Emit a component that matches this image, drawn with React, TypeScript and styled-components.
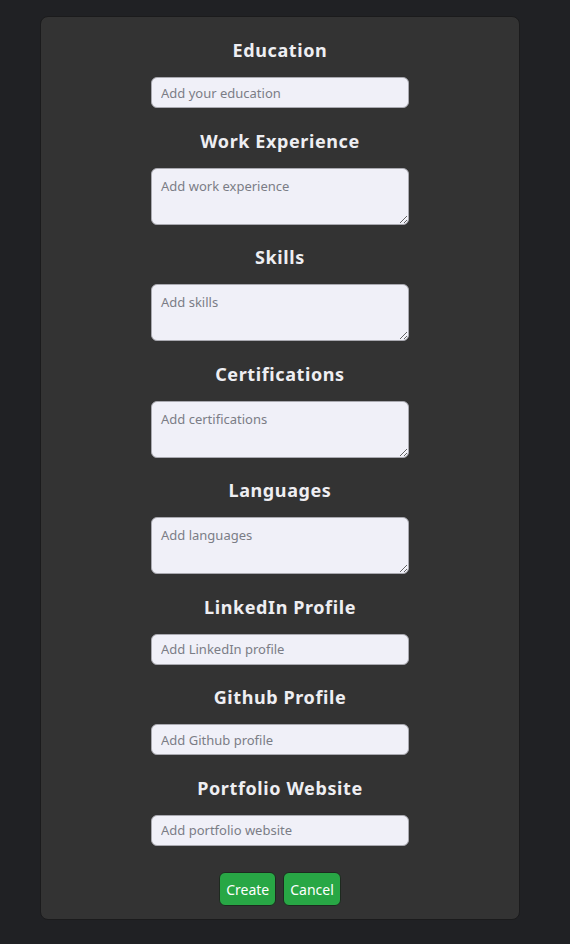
import React from "react";
import styled, { createGlobalStyle } from "styled-components";

const GlobalStyle = createGlobalStyle`
  body {
    margin: 0;
    background: #202124;
    font-family: "Noto Sans", "DejaVu Sans", sans-serif;
  }
`;

const Card = styled.form`
  width: 480px;
  box-sizing: border-box;
  margin: 16px 0 0 40px;
  padding: 22px 0 13px;
  background: #333333;
  border: 1px solid #1b1b1c;
  border-radius: 8px;
  display: flex;
  flex-direction: column;
  align-items: center;
`;

const Group = styled.div`
  display: flex;
  flex-direction: column;
  align-items: center;
  gap: 16px;
  margin-bottom: 21.5px;
`;

const Heading = styled.label`
  color: #eeeef2;
  font-size: 18px;
  font-weight: 700;
  line-height: 22px;
  letter-spacing: 0.6px;
`;

const fieldStyle = `
  width: 258px;
  box-sizing: border-box;
  background: #f0f0f8;
  border: 1px solid #a9a9b0;
  border-radius: 6px;
  font-family: "Noto Sans", "DejaVu Sans", sans-serif;
  font-size: 13px;
  color: #333;
  padding: 0 9px;
  outline: none;
  &::placeholder { color: #7b7d86; }
`;

const Input = styled.input`
  ${fieldStyle}
  height: 31px;
`;

const TextArea = styled.textarea`
  ${fieldStyle}
  height: 57px;
  padding-top: 8px;
  resize: vertical;
`;

const Actions = styled.div`
  display: flex;
  gap: 7px;
  margin-top: 5px;
`;

const Button = styled.button`
  box-sizing: border-box;
  height: 34px;
  padding: 0 6px;
  min-width: 57px;
  background: #28a745;
  color: #ffffff;
  border: 1px solid #1d2a1f;
  border-radius: 6px;
  font-family: "Noto Sans", "DejaVu Sans", sans-serif;
  font-size: 14px;
  cursor: pointer;
`;

type Field = { label: string; placeholder: string; multi?: boolean };

const fields: Field[] = [
  { label: "Education", placeholder: "Add your education" },
  { label: "Work Experience", placeholder: "Add work experience", multi: true },
  { label: "Skills", placeholder: "Add skills", multi: true },
  { label: "Certifications", placeholder: "Add certifications", multi: true },
  { label: "Languages", placeholder: "Add languages", multi: true },
  { label: "LinkedIn Profile", placeholder: "Add LinkedIn profile" },
  { label: "Github Profile", placeholder: "Add Github profile" },
  { label: "Portfolio Website", placeholder: "Add portfolio website" },
];

export default function App() {
  return (
    <>
      <GlobalStyle />
      <Card onSubmit={(e) => e.preventDefault()}>
        {fields.map((f) => (
          <Group key={f.label}>
            <Heading>{f.label}</Heading>
            {f.multi ? (
              <TextArea placeholder={f.placeholder} />
            ) : (
              <Input placeholder={f.placeholder} />
            )}
          </Group>
        ))}
        <Actions>
          <Button type="submit">Create</Button>
          <Button type="button">Cancel</Button>
        </Actions>
      </Card>
    </>
  );
}
